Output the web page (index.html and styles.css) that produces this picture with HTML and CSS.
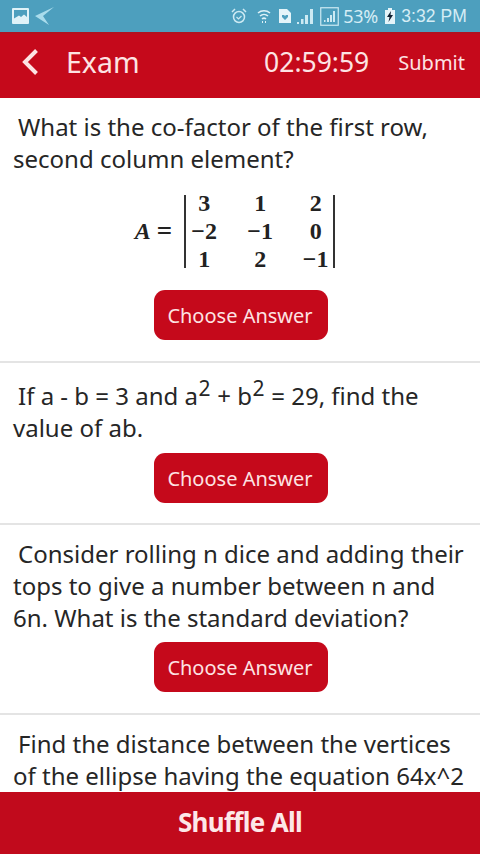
FILE: index.html
```html
<!DOCTYPE html>
<html lang="en">
<head>
<meta charset="utf-8">
<title>Exam</title>
<link rel="stylesheet" href="styles.css">
</head>
<body>
<div class="app">
  <div class="status">
    <div class="status-left">
      <svg class="i-pic" viewBox="0 0 17 16"><path fill="#dff2f8" d="M1 0h15a1 1 0 0 1 1 1v14a1 1 0 0 1-1 1H1a1 1 0 0 1-1-1V1a1 1 0 0 1 1-1z"/><path fill="#4d9fbe" d="M2 2h13v7l-3-2.500-3 2.500-2-1.500-5 3z"/></svg>
      <svg class="i-send" viewBox="0 0 20 18"><path fill="#a9dcec" d="M0 9 19 0 8 9l6 9z"/></svg>
    </div>
    <div class="status-right">
      <svg class="i-alarm" viewBox="0 0 16 16"><circle cx="8" cy="9" r="5.500" fill="none" stroke="#cdeaf3" stroke-width="1.500"/><path d="M5.500 9l2 2 3-3" fill="none" stroke="#cdeaf3" stroke-width="1.200"/><path d="M1 4l3-3M15 4l-3-3" stroke="#cdeaf3" stroke-width="1.500"/></svg>
      <svg class="i-wifi" viewBox="0 0 14 16"><path d="M1 5a9 9 0 0 1 12 0M3 8a6 6 0 0 1 8 0M5 11a3 3 0 0 1 4 0" fill="none" stroke="#dff2f8" stroke-width="1.500"/><path d="M5 14h1M8 14h1" stroke="#dff2f8" stroke-width="2"/></svg>
      <svg class="i-sim" viewBox="0 0 12 14"><path fill="#e4f4f9" d="M0 0h8l4 4v10H0z"/><path fill="#4d9fbe" d="M6 11 3 8V6h2l1 1 1-1h2v2z"/></svg>
      <svg class="i-sig" viewBox="0 0 16 16"><path fill="#cdeaf3" d="M0 14h2v2H0zM4 11h2.500v5H4zM8 7h3v9H8zM13 1h3v15h-3z"/></svg>
      <svg class="i-box" viewBox="0 0 19 19"><rect x=".75" y=".75" width="17.500" height="17.500" fill="none" stroke="#cdeaf3" stroke-width="1.200"/><path fill="#cdeaf3" d="M4 13h1.500v2H4zM7 11h2v4H7zM10 8h2v7h-2zM13 4h2v11h-2z"/></svg>
      <span class="pct">53%</span>
      <svg class="i-batt" viewBox="0 0 10 16"><path fill="#e4f4f9" d="M3 0h4v2h3v14H0V2h3z"/><path fill="#123" d="M6 3 2 9h2.500L3.500 14 8 7H5.500z"/></svg>
      <span class="clock">3:32 PM</span>
    </div>
  </div>

  <header class="bar">
    <svg class="back" viewBox="0 0 18 28"><path d="M15.500 2.500 4 14l11.500 11.500" fill="none" stroke="#fde3e3" stroke-width="4"/></svg>
    <span class="title">Exam</span>
    <span class="timer">02:59:59</span>
    <span class="submit">Submit</span>
  </header>

  <main class="list">
    <section class="card">
      <p class="q"><span class="ind"></span>What is the co-factor of the first row, second column element?</p>
      <div class="math">
        <span class="lhs">A</span><span class="eq">=</span>
        <div class="det">
          <span>3</span><span>1</span><span>2</span>
          <span>−2</span><span>−1</span><span>0</span>
          <span>1</span><span>2</span><span>−1</span>
        </div>
      </div>
      <button class="choose choose-math">Choose Answer</button>
    </section>
    <section class="card card-sup">
      <p class="q"><span class="ind"></span>If a - b = 3 and a<sup>2</sup> + b<sup>2</sup> = 29, find the value of ab.</p>
      <button class="choose">Choose Answer</button>
    </section>
    <section class="card">
      <p class="q"><span class="ind"></span>Consider rolling n dice and adding their tops to give a number between n and 6n. What is the standard deviation?</p>
      <button class="choose">Choose Answer</button>
    </section>
    <section class="card card-last">
      <p class="q"><span class="ind"></span>Find the distance between the vertices of the ellipse having the equation 64x^2 + 100y^2 = 6400.</p>
    </section>
  </main>

  <footer class="shuffle">Shuffle All</footer>
</div>
</body>
</html>
```

FILE: styles.css
```css
* { box-sizing: border-box; }
html, body { margin: 0; padding: 0; }
body { font-family: "Noto Sans", "Open Sans", sans-serif; background: #fff; }
.app { width: 480px; height: 854px; display: flex; flex-direction: column; overflow: hidden; }

.status { height: 32px; flex: none; background: #4d9fbe; display: flex; align-items: center; justify-content: space-between; padding: 0 13px 0 12px; color: #d5edf5; }
.status-left, .status-right { display: flex; align-items: center; }
.i-pic { width: 17px; height: 16px; }
.i-send { width: 20px; height: 18px; margin-left: 6px; }
.i-alarm { width: 16px; height: 16px; }
.i-wifi { width: 14px; height: 16px; margin-left: 10px; }
.i-sim { width: 12px; height: 14px; margin-left: 8px; }
.i-sig { width: 16px; height: 16px; margin-left: 6px; }
.i-box { width: 19px; height: 19px; margin-left: 7px; }
.pct { font-size: 18px; margin-left: 4px; letter-spacing: -.2px; }
.i-batt { width: 10px; height: 16px; margin-left: 7px; }
.clock { font-size: 17.500px; margin-left: 6px; font-family: "Liberation Sans", sans-serif; letter-spacing: .1px; }

.bar { height: 66px; flex: none; background: #c5091b; border-top: 2px solid #b2111f; color: #fde3e3; display: flex; align-items: center; padding: 0 15px 8px 21px; }
.back { width: 18px; height: 28px; }
.title { font-size: 28.500px; margin-left: 27px; }
.timer { font-size: 26.500px; margin-left: auto; }
.submit { font-size: 20px; margin-left: 29px; }

.list { flex: 1; min-height: 0; overflow: hidden; }
.card { padding: 13px 13px 21px; border-bottom: 2px solid #e4e4e4; }
.card-sup { padding-top: 15px; padding-bottom: 20px; }
.card-last { border-bottom: 0; }
.q { margin: 0; font-size: 24px; line-height: 32px; color: #262626; }
.ind { display: inline-block; width: 5px; }
.q sup { font-size: 21px; line-height: 1; vertical-align: 9px; margin: 0 .5px; }
.card-sup .choose { margin-top: 9px; }

.math { display: flex; align-items: center; justify-content: center; height: 84px; margin-top: 14px; font-family: "Liberation Serif", "DejaVu Serif", serif; font-weight: 700; font-size: 24px; color: #222; padding-right: 10px; }
.lhs { font-style: italic; }
.eq { margin-left: 6px; margin-right: 12px; font-size: 27px; }
.det { display: grid; grid-template-columns: 36px 76px 35px; grid-auto-rows: 28px; align-items: center; justify-items: center; height: 73px; align-content: center; border-left: 2px solid #333; border-right: 2px solid #333; }

.choose { display: block; width: 174px; height: 50px; margin: 8px 0 0 141px; background: #c5091b; color: #fde3e3; border: 0; border-radius: 11px; font-family: inherit; font-size: 20px; padding: 0 2px 0 0; }
.choose-math { margin-top: 17px; }

.shuffle { height: 62px; flex: none; background: #c10a1c; color: #fde8e8; display: flex; align-items: center; justify-content: center; font-size: 26px; font-weight: 700; letter-spacing: -.7px; padding-bottom: 2px; }
```
